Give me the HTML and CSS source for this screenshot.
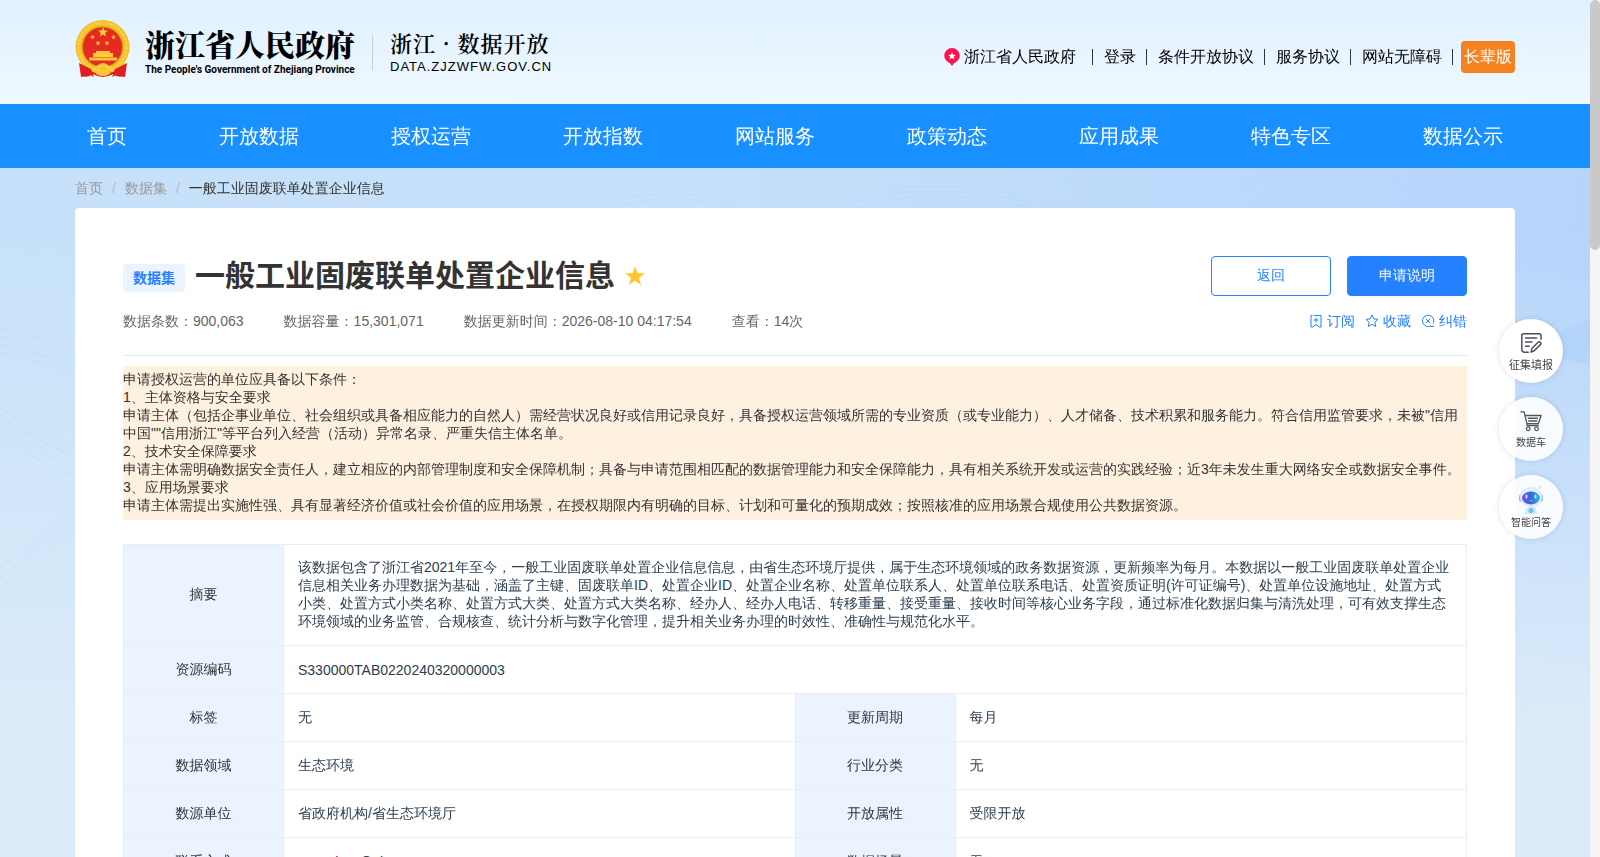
FILE: index.html
```
<!DOCTYPE html>
<html lang="zh-CN">
<head>
    <meta charset="UTF-8">
    <meta name="viewport" content="width=device-width, initial-scale=1.0">
    <title>一般工业固废联单处置企业信息</title>
    <link rel="stylesheet" href="styles.css">
</head>
<body>
    <div class="page">
        <header class="header">
            <div class="container header-inner">
                <div class="logo">
                    <svg class="emblem" viewBox="0 0 56 58">
                        <path d="M8 42 L7 56 Q13 58 18 54 Q28 60 38 54 Q43 58 49 56 L48 42Z" fill="#d81e1e"/>
                        <circle cx="27.500" cy="27" r="27" fill="#f5bd2c"/>
                        <circle cx="27.500" cy="27" r="24" fill="none" stroke="#fbd040" stroke-width="3" stroke-dasharray="3 1"/>
                        <circle cx="27.500" cy="27" r="20" fill="#e62a20" stroke="#c98a1a"/>
                        <path d="M28 7l1.400 3.400 3.600.2-2.800 2.300.9 3.600-3.100-2-3.100 2 .9-3.600-2.800-2.300 3.600-.2z" fill="#fbc93a"/>
                        <path id="s" d="M17.500 14.500l.7 1.700 1.800.1-1.400 1.200.5 1.800-1.600-1-1.600 1 .5-1.800-1.400-1.200 1.800-.1z" fill="#fbc93a"/>
                        <use href="#s" x="21"/><use href="#s" x="5.500" y="6"/><use href="#s" x="14.500" y="6"/>
                        <path d="M21 31h14v2h3v4h-20v-4h3z M14 37.500h28v3h-28z" fill="#fbc93a"/>
                        <path d="M6 41 Q16 51 23 45 Q28 41 33 45 Q40 51 50 41 L49 48 Q38 55 32 49 Q28 46 24 49 Q18 55 7 48Z" fill="#fbc93a"/>
                        <path d="M4 43l12 6 3 8-4-2-9 2z M52 43l-12 6-3 8 4-2 9 2z" fill="#e02020"/>
                        <ellipse cx="28" cy="53" rx="7" ry="3" fill="#fbc93a"/>
                    </svg>
                    <div class="logo-gov">
                        <span class="gov-cn">浙江省人民政府</span>
                        <span class="gov-en">The People's Government of Zhejiang Province</span>
                    </div>
                    <div class="logo-data">
                        <span class="data-cn">浙江 · 数据开放</span>
                        <span class="data-en">DATA.ZJZWFW.GOV.CN</span>
                    </div>
                </div>
                <div class="top-links">
                    <a class="site-link" href="#">
                        <svg class="pin" viewBox="0 0 16 18"><path d="M8 0a7.700 7.700 0 0 1 7.700 7.700c0 4-3.500 6.300-5.700 7.500L8 18l-2-2.800C3.800 14 .3 11.700.3 7.700A7.700 7.700 0 0 1 8 0z" fill="#fb1350"/><path d="M8 4.200l1.100 2.500 2.700.2-2.100 1.800.7 2.700L8 9.900l-2.400 1.500.7-2.700-2.100-1.800 2.700-.2z" fill="#fff"/></svg>
                        浙江省人民政府
                    </a>
                    <i class="sep"></i><a href="#">登录</a>
                    <i class="sep"></i><a href="#">条件开放协议</a>
                    <i class="sep"></i><a href="#">服务协议</a>
                    <i class="sep"></i><a href="#">网站无障碍</a>
                    <i class="sep"></i><a class="elder" href="#">长辈版</a>
                </div>
            </div>
        </header>

        <nav class="nav">
            <div class="container nav-inner">
                <a href="#">首页</a>
                <a href="#">开放数据</a>
                <a href="#">授权运营</a>
                <a href="#">开放指数</a>
                <a href="#">网站服务</a>
                <a href="#">政策动态</a>
                <a href="#">应用成果</a>
                <a href="#">特色专区</a>
                <a href="#">数据公示</a>
            </div>
        </nav>

        <main class="main">
            <svg class="waves" viewBox="0 0 1590 689" preserveAspectRatio="none">
                <g fill="none" stroke="#9ccdf2" stroke-opacity=".2">
                    <path d="M590 40Q680 10 740 40M600 44Q680 16 730 44M810 44Q900 -6 1080 40M820 48Q910 0 1070 44M830 52Q920 6 1060 48"/>
                    <path d="M0 160Q50 170 80 190M0 168Q50 178 80 198M0 176Q50 186 80 206M0 184Q50 194 80 214M0 240Q50 270 80 280M0 250Q50 280 80 290M0 260Q50 290 80 300M0 270Q50 300 80 310M0 400Q50 360 80 340M0 410Q50 370 80 350M0 420Q50 380 80 360"/>
                    <path d="M1510 160Q1550 150 1590 130M1510 168Q1550 160 1590 140M1510 176Q1550 170 1590 150M1510 184Q1550 180 1590 160M1510 192Q1550 190 1590 170"/>
                </g>
                <path d="M1510 180Q1550 190 1590 196V150Q1550 172 1510 180z" fill="#a6cdfb" fill-opacity=".4"/>
            </svg>
            <div class="container">
                <div class="breadcrumb">
                    <a href="#">首页</a><i>/</i><a href="#">数据集</a><i>/</i><span>一般工业固废联单处置企业信息</span>
                </div>

                <section class="card">
                    <div class="title-row">
                        <span class="tag">数据集</span>
                        <h1>一般工业固废联单处置企业信息</h1>
                        <svg class="star" viewBox="0 0 20 20"><path d="M10 0l2.400 7.200H20l-6.100 4.700L16.200 19 10 14.700 3.800 19l2.300-7.100L0 7.200h7.600z" fill="#ffc72e"/></svg>
                        <div class="buttons">
                            <button class="btn" type="button">返回</button>
                            <button class="btn btn-primary" type="button">申请说明</button>
                        </div>
                    </div>
                    <div class="meta-row">
                        <span>数据条数：900,063</span>
                        <span>数据容量：15,301,071</span>
                        <span>数据更新时间：2026-08-10 04:17:54</span>
                        <span>查看：14次</span>
                        <div class="actions">
                            <a href="#"><svg viewBox="0 0 14 14"><path d="M3.500 1.500H2v11.500h1.500L7 10.500l3.500 2.500H12V1.500H5M7 3.500v5M4.500 6h5"/></svg>订阅</a>
                            <a href="#"><svg viewBox="0 0 14 14"><path d="M7 1l1.800 3.900 4.200.5-3.100 2.900.8 4.200L7 10.400l-3.700 2.100.8-4.200L1 5.400l4.200-.5z"/></svg>收藏</a>
                            <a href="#"><svg viewBox="0 0 14 14"><path d="M10 11.800A5.700 5.700 0 1 1 12.200 9.500M9.500 12.500h3.500M4.700 4.700l4.600 4.600M9.300 4.700l-4.600 4.600"/></svg>纠错</a>
                        </div>
                    </div>

                    <div class="notice">
                        申请授权运营的单位应具备以下条件：<br>
                        1、主体资格与安全要求<br>
                        申请主体（包括企事业单位、社会组织或具备相应能力的自然人）需经营状况良好或信用记录良好，具备授权运营领域所需的专业资质（或专业能力）、人才储备、技术积累和服务能力。符合信用监管要求，未被"信用中国""信用浙江"等平台列入经营（活动）异常名录、严重失信主体名单。<br>
                        2、技术安全保障要求<br>
                        申请主体需明确数据安全责任人，建立相应的内部管理制度和安全保障机制；具备与申请范围相匹配的数据管理能力和安全保障能力，具有相关系统开发或运营的实践经验；近3年未发生重大网络安全或数据安全事件。<br>
                        3、应用场景要求<br>
                        申请主体需提出实施性强、具有显著经济价值或社会价值的应用场景，在授权期限内有明确的目标、计划和可量化的预期成效；按照核准的应用场景合规使用公共数据资源。
                    </div>

                    <table class="info">
                        <colgroup><col class="col-label"><col><col class="col-label"><col></colgroup>
                        <tr class="summary">
                            <th scope="row">摘要</th>
                            <td colspan="3">该数据包含了浙江省2021年至今，一般工业固废联单处置企业信息信息，由省生态环境厅提供，属于生态环境领域的政务数据资源，更新频率为每月。本数据以一般工业固废联单处置企业信息相关业务办理数据为基础，涵盖了主键、固废联单ID、处置企业ID、处置企业名称、处置单位联系人、处置单位联系电话、处置资质证明(许可证编号)、处置单位设施地址、处置方式小类、处置方式小类名称、处置方式大类、处置方式大类名称、经办人、经办人电话、转移重量、接受重量、接收时间等核心业务字段，通过标准化数据归集与清洗处理，可有效支撑生态环境领域的业务监管、合规核查、统计分析与数字化管理，提升相关业务办理的时效性、准确性与规范化水平。</td>
                        </tr>
                        <tr><th scope="row">资源编码</th><td class="latin" colspan="3">S330000TAB0220240320000003</td></tr>
                        <tr><th scope="row">标签</th><td>无</td><th scope="row">更新周期</th><td>每月</td></tr>
                        <tr><th scope="row">数据领域</th><td>生态环境</td><th scope="row">行业分类</th><td>无</td></tr>
                        <tr><th scope="row">数源单位</th><td>省政府机构/省生态环境厅</td><th scope="row">开放属性</th><td>受限开放</td></tr>
                        <tr><th scope="row">联系方式</th><td class="latin">sunyuhan@zj.gov.cn</td><th scope="row">数据场景</th><td>无</td></tr>
                    </table>
                </section>
            </div>
        </main>
    </div>

    <div class="scrollbar"><div class="scrollbar-thumb"></div></div>

    <aside class="float-menu">
        <a class="solid" href="#">
            <svg viewBox="0 0 24 24" fill="none" stroke="#4a4f5c" stroke-width="1.600" stroke-linecap="round" stroke-linejoin="round"><path d="M9 22H5a3 3 0 0 1-3-3V4a2 2 0 0 1 2-2h17a2 2 0 0 1 2 2v4M6 6.500h12M6 11h7M6 15.500h4M12 22l1-4 7-7a1.800 1.800 0 0 1 2.500 2.500l-7 7z"/></svg>
            征集填报
        </a>
        <a href="#">
            <svg viewBox="0 0 24 24" fill="none" stroke="#555" stroke-width="1.400" stroke-linecap="round" stroke-linejoin="round"><path d="M1 2h3.500L8 17h12M5.500 6H23l-3 9H7.500M9 9h10M9.500 12h9"/><circle cx="9" cy="20.500" r="2"/><circle cx="18" cy="20.500" r="2"/></svg>
            数据车
        </a>
        <a href="#">
            <svg class="robot" viewBox="0 0 26 30"><defs><linearGradient id="face"><stop offset="0" stop-color="#7a4be0"/><stop offset=".5" stop-color="#3568d0"/><stop offset="1" stop-color="#35b6f0"/></linearGradient></defs><path d="M21 4l2-3" stroke="#8ed6f5"/><rect x="1" y="9" width="24" height="8" rx="3" fill="#8fb4ea"/><ellipse cx="13" cy="12" rx="11" ry="9.500" fill="#e4f1fc" stroke="#bcd8f2" stroke-width=".6"/><ellipse cx="13" cy="13" rx="9" ry="6.500" fill="url(#face)"/><path d="M8.500 12.500v-2M17.500 12.500v-2" stroke="#9fe9ff" stroke-width="2" stroke-linecap="round"/><path d="M11.500 15.500q1.500 1.500 3 0z" fill="#fff"/><path d="M8 23q5-3 10 0l1 6H7z" fill="#d5e8f8"/><circle cx="13" cy="25.500" r="2.500" fill="#5ec3f7"/></svg>
            智能问答
        </a>
    </aside>
</body>
</html>
```
FILE: styles.css
```
* {
    box-sizing: border-box;
}

html,
body {
    height: 100%;
    margin: 0;
}

body {
    font-family: "Liberation Sans", "Droid Sans Fallback", "WenQuanYi Micro Hei", "WenQuanYi Zen Hei", "Noto Sans CJK SC", sans-serif;
    font-size: 14px;
    line-height: 18px;
    color: #333;
    text-spacing-trim: space-all;
    overflow: hidden;
}

a {
    color: inherit;
    text-decoration: none;
}

i {
    font-style: normal;
}

.page {
    height: 100vh;
    margin-right: 10px;
    overflow-y: auto;
    scrollbar-width: none;
}

.container {
    max-width: 1440px;
    margin: 0 auto;
}

/* 滚动条 */
.scrollbar {
    position: fixed;
    top: 0;
    right: 0;
    width: 10px;
    height: 100vh;
    background: #f5f5f5;
}

.scrollbar-thumb {
    height: 250px;
    background: #c9c9c9;
    border-radius: 5px;
}

/* 顶部 */
.header {
    background: linear-gradient(180deg, #e0f1ff, #eff8ff);
}

.header-inner {
    display: flex;
    justify-content: space-between;
    height: 104px;
    padding-top: 20px;
}

.logo {
    display: flex;
}

.emblem {
    width: 56px;
    height: 58px;
    margin-right: 14px;
}

.logo-gov,
.logo-data {
    display: flex;
    flex-direction: column;
    color: #000;
    white-space: nowrap;
}

.logo-gov {
    padding-top: 4px;
}

.gov-cn {
    font: 900 30px/38px "Noto Serif CJK SC", "Noto Sans CJK SC", serif;
}

.gov-en {
    font-family: Roboto, "Liberation Sans", sans-serif;
    font-weight: 700;
    font-size: 10px;
    line-height: 16px;
}

.logo-data {
    margin: 15px 0 0 17px;
    padding-left: 17px;
    height: 35px;
    border-left: 1px solid #ccc;
}

.data-cn {
    font: 600 22px/16px "Noto Serif CJK SC", "Noto Sans CJK SC", serif;
    letter-spacing: 1px;
}

.data-en {
    margin-top: 8px;
    font-size: 13px;
    line-height: 16px;
    letter-spacing: 1px;
}

.top-links {
    display: flex;
    align-items: center;
    height: 32px;
    margin-top: 21px;
    font-size: 16px;
    color: #000;
}

.site-link {
    display: flex;
    align-items: center;
    gap: 4px;
    margin-right: 6px;
}

.pin {
    width: 16px;
    height: 18px;
}

.sep {
    width: 1px;
    height: 16px;
    margin: 0 11px 0 10px;
    background: #333;
}

.elder {
    margin-left: -3px;
    padding: 0 3px;
    line-height: 32px;
    color: #fff;
    background: #f58220;
    border-radius: 4px;
}

/* 导航 */
.nav {
    background: #1890ff;
}

.nav-inner {
    display: flex;
    justify-content: space-between;
    padding: 0 12px;
    font-size: 20px;
    line-height: 64px;
    color: #fff;
}

/* 主体 */
.main {
    position: relative;
    min-height: 2770px;
    background: linear-gradient(180deg, rgba(219, 235, 249, 0) 60px, #dbebf9 560px), linear-gradient(100deg, #c6e1f9 0, #c7e0fb 40%, #bbd8fb 75%, #b2d3fc 100%) 0 0 / 100% 700px;
}

.waves {
    position: absolute;
    top: 0;
    left: 0;
    width: 100%;
    height: 689px;
}

.main .container {
    position: relative;
}

.breadcrumb {
    padding: 11px 0;
    line-height: 18px;
    color: #999;
}

.breadcrumb i {
    margin: 0 9px;
    color: #b4bcc6;
}

.breadcrumb span {
    color: #333;
}

.card {
    min-height: 2600px;
    padding: 48px;
    background: #fff;
    border-radius: 4px;
}

.title-row {
    display: flex;
    align-items: center;
    height: 40px;
}

.tag,
h1 {
    font-family: "Liberation Sans", "Noto Sans CJK SC", sans-serif;
    font-weight: bold;
}

.tag {
    margin: 4px 10px 0 0;
    padding: 0 10px;
    line-height: 28px;
    color: #2681ff;
    background: #eaf3ff;
    border-radius: 4px;
}

h1 {
    margin: 0;
    font-size: 30px;
    line-height: 40px;
}

.star {
    width: 20px;
    height: 20px;
    margin-left: 10px;
}

.buttons {
    display: flex;
    gap: 16px;
    margin-left: auto;
}

.btn {
    width: 120px;
    height: 40px;
    padding: 0 0 2px;
    font: inherit;
    color: #2681ff;
    background: #fff;
    border: 1px solid #2681ff;
    border-radius: 4px;
    cursor: pointer;
}

.btn-primary {
    color: #fff;
    background: #2681ff;
}

.meta-row {
    display: flex;
    gap: 40px;
    padding: 16px 0 25px;
    color: #666;
    border-bottom: 1px solid #e4e4e4;
}

.actions {
    display: flex;
    gap: 10px;
    margin-left: auto;
    color: #2681ff;
}

.actions a {
    display: flex;
    align-items: center;
    gap: 4px;
}

.actions svg {
    width: 14px;
    height: 14px;
    fill: none;
    stroke: #2681ff;
}

.notice {
    margin: 10px 0 24px;
    padding: 4px 0 6px;
    background: #fff1df;
}

.info {
    width: 100%;
    table-layout: fixed;
    border-collapse: collapse;
}

.col-label {
    width: 160px;
}

.info th,
.info td {
    height: 48px;
    padding: 0 14px 2px;
    border: 1px solid #ebeef0;
}

.info th {
    font-weight: normal;
    background: #eaf3ff;
}

.info td {
    color: #2c3e50;
}

.info .latin {
    padding-bottom: 0;
}

.info .summary td {
    height: 101px;
}

/* 右侧悬浮菜单 */
.float-menu {
    position: fixed;
    top: 319px;
    right: 37px;
    display: flex;
    flex-direction: column;
    gap: 14px;
}

.float-menu a {
    display: flex;
    flex-direction: column;
    align-items: center;
    justify-content: center;
    gap: 3px;
    width: 64px;
    height: 64px;
    font: 10px/14px "Noto Sans CJK SC", sans-serif;
    color: #444;
    background: rgba(255, 255, 255, .88);
    border-radius: 50%;
    box-shadow: 0 0 6px rgba(0, 0, 0, .12);
}

.float-menu .solid {
    font-size: 11px;
    background: #fff;
}

.float-menu svg {
    width: 22px;
    height: 22px;
}

.float-menu .robot {
    width: 26px;
    height: 30px;
    margin-bottom: -3px;
}
```
